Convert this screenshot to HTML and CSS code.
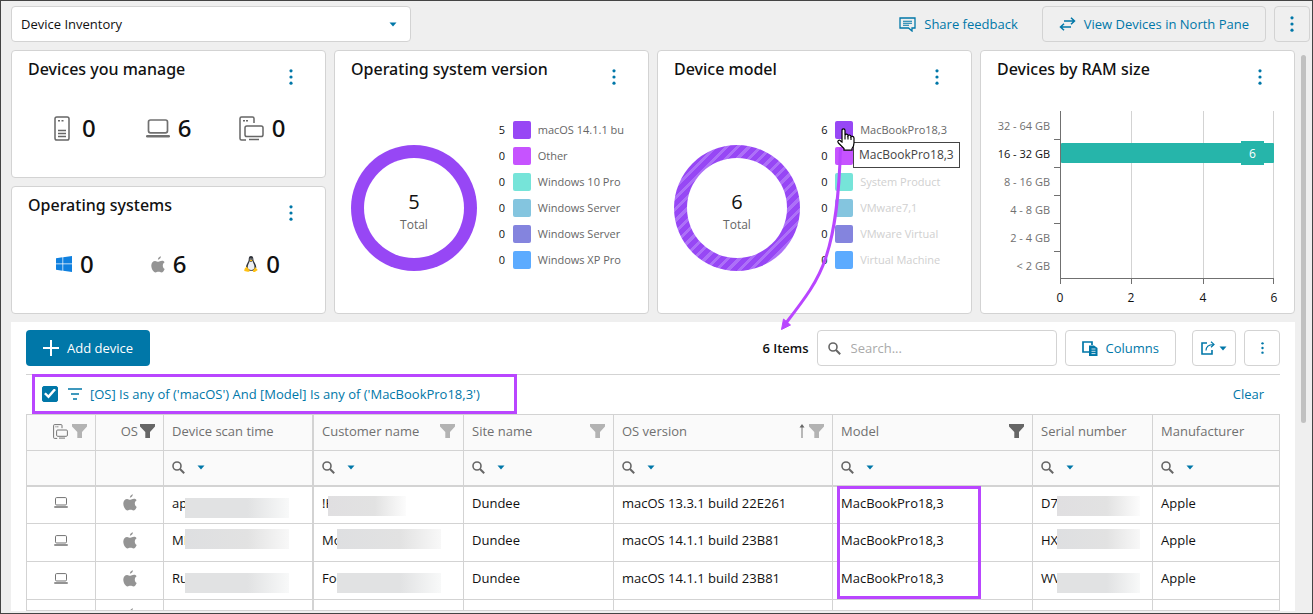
FILE: index.html
```html
<!DOCTYPE html>
<html lang="en">
<head>
<meta charset="utf-8">
<meta name="viewport" content="width=device-width, initial-scale=1">
<title>Device Inventory</title>
<link rel="stylesheet" href="styles.css">
</head>
<body>
<svg class="sprite" aria-hidden="true">
  <symbol id="kebab" viewBox="0 0 4 16"><circle cx="2" cy="1.8" r="1.6"/><circle cx="2" cy="8" r="1.6"/><circle cx="2" cy="14.2" r="1.6"/></symbol>
  <symbol id="caret" viewBox="0 0 8 5"><path d="M0.5 0.5h7L4 4.5z" fill="currentColor"/></symbol>
  <symbol id="funnel" viewBox="0 0 15 14"><path d="M0 0h15v2.5L10 8v6L5.300 14V8L0 2.500z" fill="currentColor"/></symbol>
  <symbol id="search" viewBox="0 0 13 13"><circle cx="5" cy="5" r="4" fill="none" stroke="currentColor" stroke-width="1.6"/><path d="M8 8l4.200 4.200" stroke="currentColor" stroke-width="2"/></symbol>
  <symbol id="server" viewBox="0 0 16 25"><g fill="none" stroke="#666" stroke-width="1.500"><rect x="1" y="1" width="14" height="23" rx="1.800"/><path d="M4 14.500h8M4 17.500h8M4 20.500h8M4 4.700h2M7.500 4.700h2"/></g></symbol>
  <symbol id="laptop" viewBox="0 0 24 19"><rect x="2.500" y="1" width="19" height="12.800" rx="2" fill="none" stroke="#707070" stroke-width="1.700"/><path d="M1.200 17.200h21.600" stroke="#707070" stroke-width="2.400" stroke-linecap="round"/></symbol>
  <symbol id="devices" viewBox="0 0 25 25"><g fill="none" stroke="#666" stroke-width="1.500"><path d="M15 7V2.500Q15 1 13.500 1h-11Q1 1 1 2.500v20Q1 24 2.500 24H7M4 4.700h2M7 4.700h2"/><rect x="6" y="10" width="18" height="10.500" rx="1.800"/><path d="M10 23.500h10"/></g></symbol>
  <symbol id="apple" viewBox="0 0 14 17"><path d="M9.900.2C10 1.700 8.700 3.500 6.900 3.700 6.800 2.200 8.200.5 9.900.2zM13.700 13c-.8 1.900-1.800 3.500-3.200 3.500-1.200 0-1.600-.7-3-.7s-1.900.7-3 .7C2.500 16.500.3 13 .3 9.600c0-3 1.800-4.700 3.800-4.700 1.300 0 2.100.8 3.300.8 1.100 0 1.900-.9 3.600-.9 1 0 1.900.5 2.600 1.400-2.600 1.600-2.200 5.500.1 6.800z" fill="#949494"/></symbol>
  <symbol id="windows" viewBox="0 0 16 16"><path d="M0 2.200L6.500 1.300V7.600H0zM7.200 1.200L16 0v7.600H7.200zM0 8.300h6.500v6.400L0 13.800zM7.200 8.300H16V16l-8.800-1.200z" fill="#0f80df"/></symbol>
  <symbol id="linux" viewBox="0 0 14 16"><path d="M4.700 3.500C4.700 1.200 5.500.1 7 .1s2.400 1.100 2.400 3.400c0 2.500 2.900 4.200 2.900 8.500L10 14.700H4.500L2 11.500c0-3.500 2.700-5.300 2.700-8z" fill="#30333a"/><path d="M5.500 5.200L7 6l1.600-.9c.5 2.300 1.900 3.400 1.900 6.200 0 1.600-1.400 2.700-3.300 2.700-2 0-3.500-1-3.500-2.800 0-2.500 1.500-4 1.800-6z" fill="#eef0f3"/><circle cx="6.200" cy="3" r=".6" fill="#fff"/><circle cx="8" cy="3" r=".6" fill="#fff"/><path d="M5.300 4.300L7 3.700l1.700.6L7 5.600zM2.500 10.600l3.200 3.600c0 1.200-.8 1.900-2 1.600L.2 14.900l.4-2.200zM11.500 10.900l.6 1.300 1.700 1.800-3 2c-1.300.2-2.100-.3-1.900-1.400z" fill="#ffc114"/></symbol>
</svg>

<div class="frame">
  <header class="topbar">
    <div class="picker">
      <select class="picker-select" aria-label="Dashboard view"><option>Device Inventory</option></select>
      <svg class="picker-caret" width="8" height="5"><use href="#caret"/></svg>
    </div>
    <div class="topbar-actions">
      <button class="link-button" type="button">
        <svg width="17" height="15" viewBox="0 0 17 15" fill="none" stroke="currentColor" stroke-width="1.300"><path d="M1 1h15v10h-3v3l-3.500-3H1z"/><path d="M4 4.200h9M4 6.200h9M4 8.200h6" stroke-width="1.100"/></svg>
        Share feedback
      </button>
      <button class="button button-clear" type="button">
        <svg width="17" height="14" viewBox="0 0 17 14" fill="none" stroke="currentColor" stroke-width="1.500"><path d="M5 4h10.500M12 .7L15.500 4 12 7.300M12 10H1.500M5 6.700L1.500 10 5 13.300"/></svg>
        View Devices in North Pane
      </button>
      <button class="button button-square button-clear" type="button" aria-label="More options"><svg class="kebab" width="4" height="16"><use href="#kebab"/></svg></button>
    </div>
  </header>

  <main class="content">
    <section class="cards">
      <div class="stack">
        <article class="card">
          <div class="card-head"><h2>Devices you manage</h2><button class="menu" type="button" aria-label="Devices you manage menu"><svg class="kebab" width="4" height="16"><use href="#kebab"/></svg></button></div>
          <div class="stats">
            <div class="stat wide"><svg width="16" height="25"><use href="#server"/></svg>0</div>
            <div class="stat"><svg width="24" height="19"><use href="#laptop"/></svg>6</div>
            <div class="stat"><svg width="25" height="25"><use href="#devices"/></svg>0</div>
          </div>
        </article>
        <article class="card">
          <div class="card-head"><h2>Operating systems</h2><button class="menu" type="button" aria-label="Operating systems menu"><svg class="kebab" width="4" height="16"><use href="#kebab"/></svg></button></div>
          <div class="stats">
            <div class="stat"><svg width="16" height="16"><use href="#windows"/></svg>0</div>
            <div class="stat"><svg width="14" height="17"><use href="#apple"/></svg>6</div>
            <div class="stat"><svg width="14" height="16"><use href="#linux"/></svg>0</div>
          </div>
        </article>
      </div>

      <article class="card">
        <div class="card-head"><h2>Operating system version</h2><button class="menu" type="button" aria-label="Operating system version menu"><svg class="kebab" width="4" height="16"><use href="#kebab"/></svg></button></div>
        <div class="donut-body">
          <div class="donut solid"><div class="donut-hole"><span class="total">5</span><span class="total-label">Total</span></div></div>
          <ul class="legend">
            <li><b>5</b><i class="violet"></i><span>macOS 14.1.1 bu</span></li>
            <li><b>0</b><i class="magenta"></i><span>Other</span></li>
            <li><b>0</b><i class="mint"></i><span>Windows 10 Pro</span></li>
            <li><b>0</b><i class="sky"></i><span>Windows Server</span></li>
            <li><b>0</b><i class="indigo"></i><span>Windows Server</span></li>
            <li><b>0</b><i class="blue"></i><span>Windows XP Pro</span></li>
          </ul>
        </div>
      </article>

      <article class="card">
        <div class="card-head"><h2>Device model</h2><button class="menu" type="button" aria-label="Device model menu"><svg class="kebab" width="4" height="16"><use href="#kebab"/></svg></button></div>
        <div class="donut-body">
          <div class="donut striped"><div class="donut-hole"><span class="total">6</span><span class="total-label">Total</span></div></div>
          <ul class="legend">
            <li><b>6</b><i class="violet"></i><span>MacBookPro18,3</span></li>
            <li><b>0</b><i class="magenta"></i><span></span></li>
            <li class="dim"><b>0</b><i class="mint"></i><span>System Product</span></li>
            <li class="dim"><b>0</b><i class="sky"></i><span>VMware7,1</span></li>
            <li class="dim"><b>0</b><i class="indigo"></i><span>VMware Virtual</span></li>
            <li class="dim"><b>0</b><i class="blue"></i><span>Virtual Machine</span></li>
          </ul>
        </div>
      </article>

      <article class="card">
        <div class="card-head"><h2>Devices by RAM size</h2><button class="menu" type="button" aria-label="Devices by RAM size menu"><svg class="kebab" width="4" height="16"><use href="#kebab"/></svg></button></div>
        <svg class="ram-chart" viewBox="0 0 313 212" role="img" aria-label="Devices by RAM size">
          <path class="grid" d="M150.500 12v167M222.500 12v167M292.500 12v167"/>
          <path class="axis" d="M79.500 12v173M79.500 179.500h213.500M73 40.500h6M73 68.500h6M73 96.500h6M73 124.500h6M73 152.500h6M150.500 180v5M222.500 180v5M292.500 180v5"/>
          <rect class="bar" x="80" y="44" width="213" height="20" rx="1"/>
          <rect class="bar" x="260" y="42" width="23" height="24"/>
          <text class="bar-value" x="271.500" y="59">6</text>
          <g class="y-labels"><text x="69" y="31">32 - 64 GB</text><text class="active" x="69" y="59">16 - 32 GB</text><text x="69" y="87">8 - 16 GB</text><text x="69" y="115">4 - 8 GB</text><text x="69" y="143">2 - 4 GB</text><text x="69" y="171">&lt; 2 GB</text></g>
          <g class="x-labels"><text x="79" y="203">0</text><text x="150" y="203">2</text><text x="222" y="203">4</text><text x="293" y="203">6</text></g>
        </svg>
      </article>
    </section>

    <section class="panel">
      <div class="toolbar">
        <button class="button button-primary" type="button"><svg width="16" height="16" viewBox="0 0 16 16"><path d="M8 0v16M0 8h16" stroke="#fff" stroke-width="2"/></svg>Add device</button>
        <div class="toolbar-right">
          <span class="count">6 Items</span>
          <label class="search"><svg width="13" height="13"><use href="#search"/></svg><input type="search" placeholder="Search..." aria-label="Search"></label>
          <button class="button columns" type="button"><svg width="16" height="15" viewBox="0 0 16 15"><path d="M7 11H1V1h9v3" fill="none" stroke="currentColor" stroke-width="1.700"/><path d="M7 4.500h5l3.500 2.500v8H7z" fill="currentColor"/><path d="M9.500 8h4M9.500 10.300h4M9.500 12.600h4" stroke="#fff" stroke-width=".8"/></svg>Columns</button>
          <div class="button-group">
            <button class="button export" type="button" aria-label="Export"><svg width="14" height="14" viewBox="0 0 14 14" fill="none" stroke="currentColor" stroke-width="1.600"><path d="M6 2H1v11h10V9"/><path d="M5 9.500C5 6 7 3.800 12.500 3.500M10 .7l3 2.700-3 2.800" stroke-width="1.200"/></svg><svg width="8" height="5"><use href="#caret"/></svg></button>
            <button class="button button-square thin" type="button" aria-label="Grid options"><svg class="kebab" width="3" height="12"><use href="#kebab"/></svg></button>
          </div>
        </div>
      </div>
      <div class="filter-bar">
        <label class="filter">
          <input class="filter-check" type="checkbox" checked aria-label="Filter enabled">
          <svg width="14" height="12" viewBox="0 0 14 12"><path d="M0 1h14M3 6h8M5 11h4" stroke="currentColor" stroke-width="1.600"/></svg>
          <span>[OS] Is any of ('macOS') And [Model] Is any of ('MacBookPro18,3')</span>
        </label>
        <button class="clear" type="button">Clear</button>
      </div>
      <div class="table-clip">
      <table class="grid-table">
        <colgroup><col class="c-type"><col class="c-os"><col class="c-name"><col class="c-name"><col class="c-name"><col class="c-version"><col class="c-model"><col class="c-serial"><col></colgroup>
        <thead>
          <tr>
            <th><div class="th end"><svg width="15" height="15"><use href="#devices"/></svg><svg class="funnel" width="15" height="14"><use href="#funnel"/></svg></div></th>
            <th><div class="th end tight">OS<svg class="funnel on" width="15" height="14"><use href="#funnel"/></svg></div></th>
            <th class="pinned"><div class="th">Device scan time</div></th>
            <th><div class="th">Customer name<svg class="funnel" width="15" height="14"><use href="#funnel"/></svg></div></th>
            <th><div class="th">Site name<svg class="funnel" width="15" height="14"><use href="#funnel"/></svg></div></th>
            <th><div class="th">OS version<span class="sorted"><svg width="6" height="14" viewBox="0 0 6 14"><path d="M3 14V2" stroke="#777"/><path d="M.5 3.500L3 0l2.500 3.500z" fill="#666"/></svg><svg class="funnel" width="15" height="14"><use href="#funnel"/></svg></span></div></th>
            <th><div class="th">Model<svg class="funnel on" width="15" height="14"><use href="#funnel"/></svg></div></th>
            <th><div class="th">Serial number</div></th>
            <th><div class="th">Manufacturer</div></th>
          </tr>
          <tr class="filters">
            <td></td><td></td>
            <td class="pinned"><button class="op" type="button" aria-label="Filter device scan time"><svg width="13" height="13"><use href="#search"/></svg><svg class="op-caret" width="8" height="5"><use href="#caret"/></svg></button></td>
            <td><button class="op" type="button" aria-label="Filter customer name"><svg width="13" height="13"><use href="#search"/></svg><svg class="op-caret" width="8" height="5"><use href="#caret"/></svg></button></td>
            <td><button class="op" type="button" aria-label="Filter site name"><svg width="13" height="13"><use href="#search"/></svg><svg class="op-caret" width="8" height="5"><use href="#caret"/></svg></button></td>
            <td><button class="op" type="button" aria-label="Filter OS version"><svg width="13" height="13"><use href="#search"/></svg><svg class="op-caret" width="8" height="5"><use href="#caret"/></svg></button></td>
            <td><button class="op" type="button" aria-label="Filter model"><svg width="13" height="13"><use href="#search"/></svg><svg class="op-caret" width="8" height="5"><use href="#caret"/></svg></button></td>
            <td><button class="op" type="button" aria-label="Filter serial number"><svg width="13" height="13"><use href="#search"/></svg><svg class="op-caret" width="8" height="5"><use href="#caret"/></svg></button></td>
            <td><button class="op" type="button" aria-label="Filter manufacturer"><svg width="13" height="13"><use href="#search"/></svg><svg class="op-caret" width="8" height="5"><use href="#caret"/></svg></button></td>
          </tr>
        </thead>
        <tbody>
          <tr>
            <td class="icon"><svg width="14" height="11"><use href="#laptop"/></svg></td><td class="icon"><svg width="14" height="17"><use href="#apple"/></svg></td>
            <td class="pinned">ap<span class="mask m-scan low"></span></td><td>!H<span class="mask m-short"></span></td><td>Dundee</td><td>macOS 13.3.1 build 22E261</td><td>MacBookPro18,3</td><td>D7<span class="mask m-serial"></span></td><td>Apple</td>
          </tr>
          <tr>
            <td class="icon"><svg width="14" height="11"><use href="#laptop"/></svg></td><td class="icon"><svg width="14" height="17"><use href="#apple"/></svg></td>
            <td class="pinned">MI<span class="mask m-scan high"></span></td><td>Mo<span class="mask m-cust high"></span></td><td>Dundee</td><td>macOS 14.1.1 build 23B81</td><td>MacBookPro18,3</td><td>HX<span class="mask m-serial high"></span></td><td>Apple</td>
          </tr>
          <tr>
            <td class="icon"><svg width="14" height="11"><use href="#laptop"/></svg></td><td class="icon"><svg width="14" height="17"><use href="#apple"/></svg></td>
            <td class="pinned">Ru<span class="mask m-scan low"></span></td><td>Foo<span class="mask m-cust low"></span></td><td>Dundee</td><td>macOS 14.1.1 build 23B81</td><td>MacBookPro18,3</td><td>WV<span class="mask m-serial low"></span></td><td>Apple</td>
          </tr>
          <tr>
            <td class="icon"><svg width="14" height="11"><use href="#laptop"/></svg></td><td class="icon"><svg width="14" height="17"><use href="#apple"/></svg></td>
            <td class="pinned"></td><td></td><td></td><td></td><td></td><td></td><td></td>
          </tr>
        </tbody>
      </table>
      </div>
    </section>
  </main>
  <div class="scroll-thumb"></div>

  <svg class="callouts" width="1311" height="612" viewBox="1 1 1311 612" aria-hidden="true">
    <rect x="33.500" y="375.500" width="482" height="37"/>
    <rect x="838.500" y="487.500" width="141" height="110"/>
    <path d="M840.500 148C839 198 835 230 826 257C818 282 803 301 786 323"/>
    <path class="head" d="M781.500 329.500L783.500 319L790.500 325z"/>
  </svg>
  <div class="tooltip" role="tooltip">MacBookPro18,3</div>
  <svg class="pointer" width="18" height="23" viewBox="0 0 18 23" aria-hidden="true"><path d="M5 14V2.500Q5 .8 6.500 .8T8 2.500V7.500Q8.400 6 9.700 6.200T11 7.600Q11.500 6.800 12.700 7.100T14 8.700Q14.500 8 15.700 8.400T17 10V15Q17 18 15 20.500V22.200H7V20.500L1.400 15Q.2 13.400 1.500 12.500T4 13.500z" fill="#fff" stroke="#000" stroke-width="1.200"/><path d="M8 7.500v4M11 8v3.500M14 9v3" stroke="#000" stroke-width="1.100"/></svg>
</div>
</body>
</html>
```
FILE: styles.css
```css
* { box-sizing: border-box; }

body {
  margin: 0;
  font: 13px/18px "Open Sans", "Noto Sans", sans-serif;
  color: #111;
  background: #efefef;
}

svg { display: block; flex: none; }
button, input, select { font: inherit; color: inherit; }
button { margin: 0; padding: 0; border: 0; background: none; color: #0077a8; }
.sprite { position: absolute; width: 0; height: 0; }
.kebab { fill: #0077a8; }

.frame {
  position: relative;
  display: flex;
  flex-direction: column;
  height: 100vh;
  overflow: hidden;
  border: 1px solid #444;
}

/* Top bar */
.topbar {
  display: flex;
  justify-content: space-between;
  gap: 16px;
  padding: 5px 2px 8px 10px;
}
.picker { position: relative; flex: 0 1 400px; }
.picker-select {
  width: 100%;
  height: 36px;
  padding: 0 28px 0 9px;
  appearance: none;
  border: 1px solid #d3d3d3;
  border-radius: 4px;
  background: #fff;
}
.picker-caret { position: absolute; right: 14px; top: 16px; color: #0077a8; pointer-events: none; }
.topbar-actions { display: flex; align-items: center; gap: 8px; }
.link-button { display: flex; align-items: center; gap: 8px; padding: 0 16px; }
.button {
  display: flex;
  align-items: center;
  justify-content: center;
  gap: 8px;
  height: 36px;
  padding: 0 16px;
  border: 1px solid #d3d3d3;
  border-radius: 4px;
  background: #fff;
}
.button-clear { background: none; }
.button-square { width: 36px; padding: 0; }

/* Cards */
.content {
  display: flex;
  flex: 1;
  flex-direction: column;
  gap: 8px;
  min-height: 0;
  padding: 0 17px 2px 10px;
  overflow: hidden;
}
.cards { display: grid; grid-template-columns: repeat(4, minmax(0, 1fr)); gap: 8px; flex: none; }
.stack { display: grid; grid-template-rows: 1fr 1fr; gap: 8px; }
.card { min-height: 128px; border: 1px solid #d3d3d3; border-radius: 4px; background: #fff; }
.card-head { display: flex; justify-content: space-between; height: 48px; padding: 6px 24px 0 16px; }
.card h2 { margin: 0; font-family: "Noto Sans", "Open Sans", sans-serif; font-size: 16px; line-height: 24px; font-weight: 500; }
.menu { display: grid; place-items: center; width: 20px; height: 40px; }
.stats { display: grid; grid-template-columns: repeat(3, 1fr); padding: 9px 16px; }
.stat { display: flex; align-items: center; justify-content: center; gap: 8px; font-family: "Noto Sans", "Open Sans", sans-serif; font-size: 24px; line-height: 40px; font-weight: 500; }
.stat.wide { gap: 12px; }

/* Donut charts */
.donut-body { display: flex; justify-content: space-between; padding: 22px 24px 0 16px; }
.donut { display: grid; place-items: center; width: 126px; height: 126px; margin-top: 24px; border-radius: 50%; }
.donut-hole { display: flex; flex-direction: column; align-items: center; justify-content: center; width: 100px; height: 100px; padding-top: 8px; border-radius: 50%; background: #fff; }
.solid { background: #9747f5; }
.striped { background: repeating-linear-gradient(135deg, #9747f5 0 5px, #ad70f8 5px 8px); }
.total { font-size: 20px; line-height: 26px; }
.total-label { font-size: 12px; line-height: 20px; color: #666; }
.legend { flex: 0 0 122px; display: grid; gap: 8px; align-content: start; margin: 0; padding: 0; list-style: none; font-size: 11px; }
.legend li { display: grid; grid-template-columns: 7px 18px 1fr; column-gap: 7px; height: 18px; color: #666; white-space: nowrap; }
.legend b { font-weight: 400; color: #111; }
.legend i { border-radius: 2px; }
.legend .dim { color: #d0d0d0; }
.legend .dim b { color: #111; }
.violet { background: #9747f5; }
.magenta { background: #c653ff; }
.mint { background: #76e4d9; }
.sky { background: #84c5df; }
.indigo { background: #8484de; }
.blue { background: #5cabff; }

/* RAM chart */
.ram-chart { width: 100%; font-size: 11px; }
.grid { stroke: #d3d3d3; fill: none; }
.axis { stroke: #707070; fill: none; }
.bar { fill: #26b5aa; }
.bar-value { fill: #fff; font-size: 12px; text-anchor: middle; }
.y-labels { fill: #707070; text-anchor: end; }
.y-labels .active { fill: #111; }
.x-labels { fill: #111; text-anchor: middle; font-size: 12px; }

/* Device panel */
.panel { flex: 1; display: flex; flex-direction: column; min-height: 0; padding: 8px 15px 0; background: #fff; }
.toolbar { display: flex; justify-content: space-between; padding-bottom: 8px; border-bottom: 1px solid #d3d3d3; }
.button-primary { border: 0; padding: 0 17px; background: #0077a8; color: #fff; }
.toolbar-right { display: flex; align-items: center; gap: 8px; }
.count { font-weight: 600; }
.search { display: flex; align-items: center; gap: 10px; width: 240px; height: 36px; padding: 0 10px; border: 1px solid #d3d3d3; border-radius: 4px; color: #666; }
.search input { flex: 1; min-width: 0; padding: 0; border: 0; outline: 0; background: none; }
.search input::placeholder { color: #aaa; opacity: 1; }
.button-group { display: flex; gap: 8px; margin-left: 8px; }
.export { width: 44px; gap: 4px; padding: 0; }
.filter-bar { display: flex; align-items: center; justify-content: space-between; flex: none; height: 39px; padding: 0 16px 2px; }
.filter { display: flex; align-items: center; gap: 8px; color: #0077a8; }
.filter-check {
  display: grid;
  place-items: center;
  width: 16px;
  height: 16px;
  margin: 0 2px 0 0;
  appearance: none;
  border: 1px solid #0077a8;
  border-radius: 2px;
}
.filter-check:checked { background: #0077a8; }
.filter-check:checked::before { content: ""; width: 12px; height: 10px; background: #fff; clip-path: polygon(0 55%, 15% 40%, 36% 65%, 84% 0, 100% 15%, 38% 100%); }

/* Table */
.table-clip { flex: 1; min-height: 0; overflow: hidden; border-bottom: 1px solid #d3d3d3; }
.grid-table { width: 100%; table-layout: fixed; border-collapse: separate; border-spacing: 0; border: solid #d3d3d3; border-width: 1px 0 0 1px; }
.c-type { width: 69px; }
.c-os { width: 68px; }
.c-name { width: 150px; }
.c-version { width: 219px; }
.c-model { width: 200px; }
.c-serial { width: 120px; }
.grid-table th, .grid-table td { position: relative; height: 38px; padding: 0 8px 5px; border: solid #d3d3d3; border-width: 0 1px 1px 0; text-align: left; font-weight: 400; white-space: nowrap; }
.grid-table .pinned { border-right-width: 2px; }
.grid-table thead th, .grid-table thead td { height: 36px; padding: 0 8px 3px; background: #fafafa; color: #707070; }
.grid-table thead .filters td { padding-bottom: 1px; border-bottom-width: 2px; }
.grid-table tbody tr:first-child td { height: 37px; }
.grid-table .icon svg { margin: 0 auto; }
.th { display: flex; align-items: center; justify-content: space-between; }
.th.end { justify-content: flex-end; gap: 4px; }
.th.tight { gap: 2px; }
.sorted { display: flex; gap: 4px; }
.funnel { color: #b3b3b3; }
.funnel.on { color: #666; }
.op { display: flex; align-items: center; gap: 12px; color: #666; }
.op-caret { color: #0077a8; }

/* Redacted values */
.mask { position: absolute; top: 9px; height: 20px; background: linear-gradient(90deg, #e0dfe1, #e2e2e2 60%, #fcfcfc); }
.mask.low { top: 11px; background: linear-gradient(90deg, #e1e2e3, #e1e2e3 60%, #f8f9f9); }
.mask.high { top: 5px; background: linear-gradient(90deg, #dedfe1, #e2e2e2 60%, #f8f8f8); }
.m-scan { left: 21px; width: 104px; }
.m-short { left: 14px; width: 78px; }
.m-cust { left: 23px; width: 104px; }
.m-serial { left: 24px; width: 83px; }

.scroll-thumb { position: absolute; top: 54px; right: 6px; width: 5px; height: 368px; border-radius: 3px; background: #c1c1c1; }

/* Annotation layer */
.callouts { position: absolute; top: 0; left: 0; fill: none; stroke: #b946ff; stroke-width: 3; pointer-events: none; }
.callouts .head { fill: #b946ff; stroke-width: 1; }
.tooltip { position: absolute; left: 852px; top: 141px; padding: 3px 5px; border: 1px solid #444; background: #fff; font-size: 12px; color: #444; }
.pointer { position: absolute; left: 836px; top: 127px; }
```
